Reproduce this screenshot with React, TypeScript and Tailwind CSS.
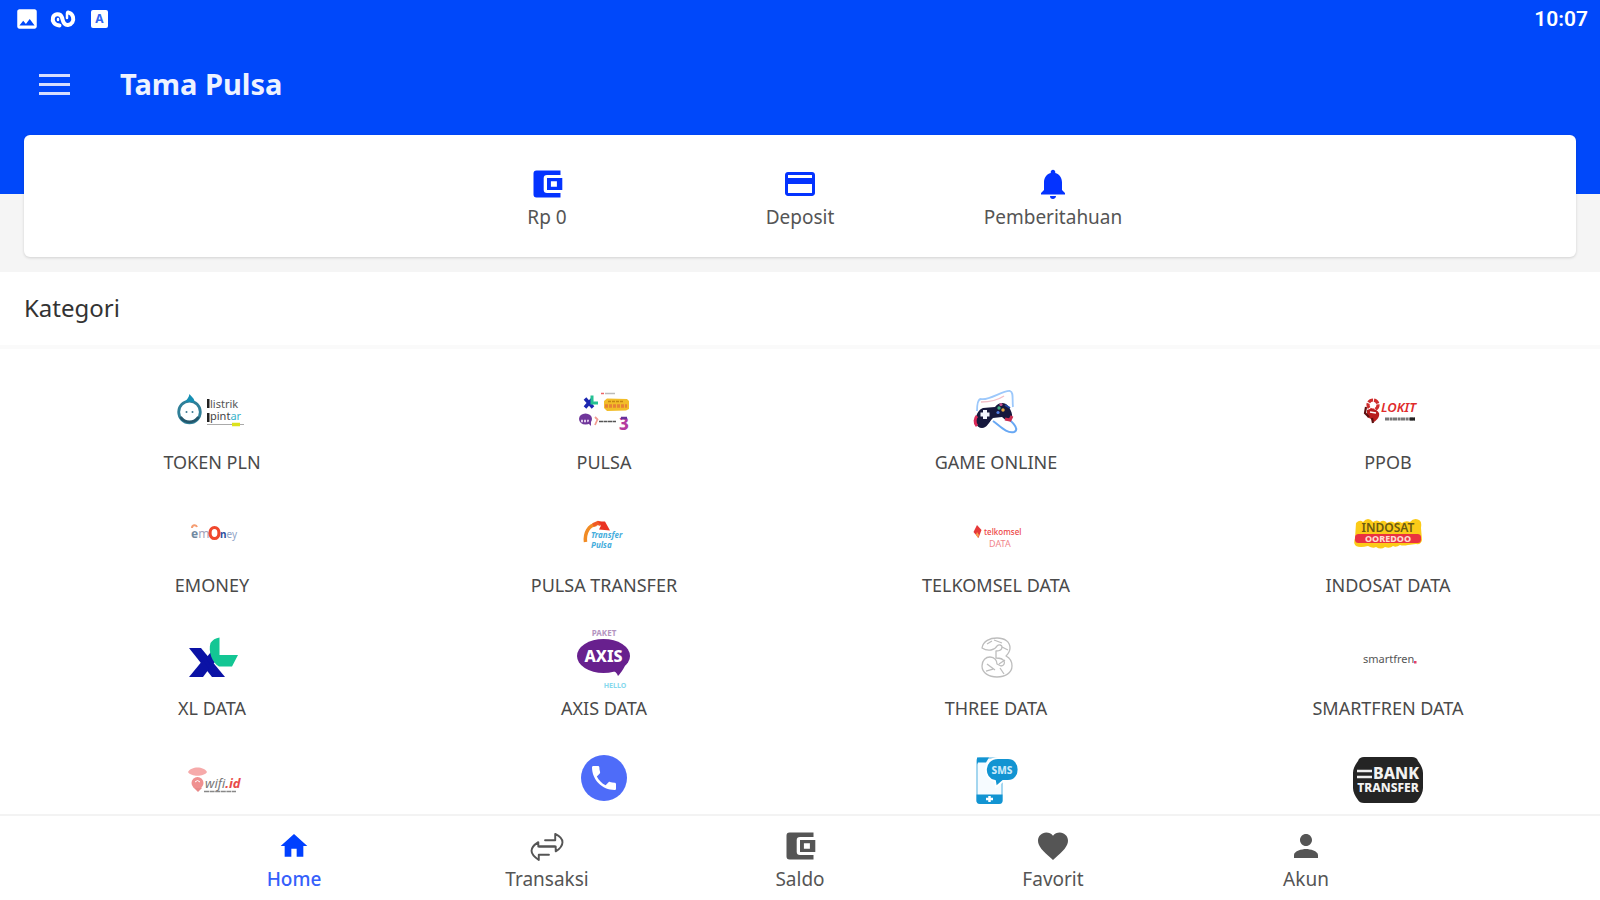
import type { ReactNode } from "react";
import { MdCreditCard, MdFavorite, MdHome, MdImage, MdNotifications, MdPerson, MdPhone } from "react-icons/md";

function WalletIcon({ className }: { className?: string }) {
  return (
    <svg viewBox="0 0 24 24" className={className} fill="currentColor" aria-hidden="true">
      <path d="M21 18v3H5a2 2 0 0 1-2-2V5a2 2 0 0 1 2-2h16v3h-9a2.200 2.200 0 0 0-2.200 2.200v7.600A2.200 2.200 0 0 0 12 18z" />
      <path fillRule="evenodd" d="M12 8h10.200v8H12zM14.600 10.200v3.600h4v-3.600z" />
    </svg>
  );
}

function TransferIcon({ className }: { className?: string }) {
  return (
    <svg
      viewBox="0 0 36 30"
      className={className}
      fill="none"
      stroke="currentColor"
      strokeWidth="2"
      strokeLinejoin="round"
      strokeLinecap="round"
      aria-hidden="true"
    >
      <path d="M16 8.500h10.500V2c4 2 7.500 5 7.500 8.500s-3 7-7 9.500v-5H10" />
      <path d="M20 23.500H9.500V29C5 26 2 23 2 19.500S5 13 9 10.500V15h17" />
    </svg>
  );
}

type WordProps = {
  x: number;
  y: number;
  size: number;
  fill: string;
  weight?: number;
  italic?: boolean;
  anchor?: "start" | "middle";
  children: ReactNode;
};

function Word({ x, y, size, fill, weight = 400, italic, anchor = "start", children }: WordProps) {
  return (
    <text
      x={x}
      y={y}
      fontSize={size}
      fill={fill}
      fontWeight={weight}
      fontStyle={italic ? "italic" : "normal"}
      textAnchor={anchor}
    >
      {children}
    </text>
  );
}

function Logo({ children }: { children: ReactNode }) {
  return (
    <svg viewBox="0 0 72 60" className="h-[60px] w-[72px] overflow-visible" aria-hidden="true">
      {children}
    </svg>
  );
}

const tokenLogo = (
  <Logo>
    <circle cx="13.500" cy="31" r="10.800" fill="none" stroke="#2f7f98" strokeWidth="2.800" />
    <path d="M9 20.500c2-2 4-4 4.500-7.500 2 3 5 4 5 8z" fill="#168eb2" />
    <path d="M4.500 36a10.800 10.800 0 0 0 18 0" fill="none" stroke="#24576c" strokeWidth="2.800" />
    <circle cx="10.500" cy="31" r="1" fill="#3b7890" />
    <circle cx="16.500" cy="31" r="1" fill="#3b7890" />
    <Word x={34} y={27} size={11} fill="#555">listrik</Word>
    <rect x="31" y="18" width="2.500" height="9" fill="#222" />
    <Word x={34} y={39} size={11} fill="#444">
      pint<tspan fill="#38b3cb">ar</tspan>
    </Word>
    <rect x="31" y="32" width="2.500" height="9" fill="#222" />
    <path d="M31 43.500h37" stroke="#aaa" strokeWidth="1.200" />
    <path d="M56 43.500h8" stroke="#dce21d" strokeWidth="3.500" />
  </Logo>
);

const pulsaLogo = (
  <Logo>
    <path d="M33 12.500h3" stroke="#e66" strokeWidth="1.500" />
    <path d="M37 12.500h10" stroke="#bbb" strokeWidth="1.500" />
    <path d="M17 17.500l8 9M17 26.500l7-8" stroke="#1c27b0" strokeWidth="3.500" />
    <path d="M24 14.500v7.500h6" stroke="#24c192" strokeWidth="3" fill="none" />
    <path d="M36 20l3-2.500 20 .5 2 2v8l-3 1.500-19 .5-3-3z" fill="#f2bd28" />
    <path d="M37 25h22" stroke="#e78334" strokeWidth="3.500" strokeDasharray="3 1" />
    <path d="M40 20.500h16" stroke="#c58612" strokeWidth="1.500" strokeDasharray="3 1" />
    <ellipse cx="17.500" cy="38" rx="6.500" ry="5.500" fill="#70379b" />
    <path d="M13 40h9" stroke="#e0c9ec" strokeWidth="2.500" strokeDasharray="2 1" />
    <path d="M19 41l4 4v-5z" fill="#70379b" />
    <path d="M27 36l2.500 2.500L27 44" stroke="#f29c8f" strokeWidth="1.800" fill="none" />
    <path d="M31 40.500h17" stroke="#555" strokeWidth="1.500" strokeDasharray="4 .5" />
    <Word x={51} y={49} size={17} weight={800} fill="#b43ba0">3</Word>
    <path d="M53 37h6" stroke="#67309b" strokeWidth="2.500" />
  </Logo>
);

const gameLogo = (
  <Logo>
    <path d="M17 30c0-6 1-12 4-12 8 2 22-9 29-8 4 1 2 9 3 16" fill="none" stroke="#9cc8fb" strokeWidth="1.800" />
    <path d="M21 21c10 0 17-2 23-6" fill="none" stroke="#f3bfc8" strokeWidth="1.500" />
    <path d="M33 40c7 5 14 13 21 11 7-3-4-12-9-16" fill="none" stroke="#68a8f4" strokeWidth="2" />
    <path d="M16 43c-2-8 3-15 7-16l12-1c3-4 7-5 11-3 4 3 7 10 6 14-3 5-7 2-10-1l-9 1c-4 4-6 10-11 10-3 0-5-2-6-4z" fill="#16183d" />
    <path d="M17 45c-3-3-2-8 0-10" stroke="#da2858" strokeWidth="3" fill="none" />
    <path d="M45 38l5 1 2-4" stroke="#c92d50" strokeWidth="3" fill="none" />
    <path d="M25 29v9M20.500 33.500h9" stroke="#f3f5ff" strokeWidth="4" />
    <circle cx="39" cy="27" r="1.700" fill="#3fae80" />
    <circle cx="43" cy="29" r="1.700" fill="#e4a940" />
    <circle cx="41" cy="23.500" r="1.600" fill="#c65391" />
    <circle cx="38" cy="31.500" r="1.600" fill="#517ce3" />
    <path d="M45 24l5 3" stroke="#1f46a2" strokeWidth="2" />
  </Logo>
);

const ppobLogo = (
  <Logo>
    <circle cx="21" cy="24" r="5" fill="#fff" stroke="#cf2d2d" strokeWidth="3.200" strokeDasharray="5 1" />
    <path d="M15 29c4-2 10-1 12 3 1 4-2 7-5 9l-3-3-4-2z" fill="#b81e1e" />
    <path d="M14 26l-1 6 4 4M20 37l1 5" stroke="#5c1010" strokeWidth="2.200" fill="none" />
    <path d="M18 31l6 1" stroke="#fff" strokeWidth="1.500" />
    <Word x={29} y={31} size={13} weight={600} italic fill="#e02b2b">LOKIT</Word>
    <path d="M33 38h30" stroke="#777" strokeWidth="3" strokeDasharray="4 .6 3 .4" />
    <path d="M58 38h5" stroke="#222" strokeWidth="3" />
  </Logo>
);

const emoneyLogo = (
  <Logo>
    <path d="M16 24c0-3 4-4 5-1" stroke="#f59d72" strokeWidth="2" fill="none" />
    <Word x={15} y={34} size={12} fill="#a3a3ba">
      <tspan fontWeight={700} fill="#7089a1">e</tspan>m
    </Word>
    <ellipse cx="38.500" cy="29" rx="4.500" ry="5.500" fill="#fff" stroke="#f0472d" strokeWidth="3.200" />
    <Word x={44} y={34} size={10} fill="#8fa3c6">
      <tspan fontWeight={700} fill="#2c4f9c">n</tspan>ey
    </Word>
  </Logo>
);

const transferLogo = (
  <Logo>
    <path d="M17.500 38c-1-9 3-17 11-17.500" fill="none" stroke="#f18b24" strokeWidth="3.500" />
    <path d="M25 21l5-2 3 1" fill="none" stroke="#f05a24" strokeWidth="4" />
    <path d="M30 17.500h7l5 9-11-1 2-4z" fill="#ea3323" />
    <Word x={23} y={34} size={8} italic weight={700} fill="#45addc">Transfer</Word>
    <Word x={23} y={44} size={8} italic weight={700} fill="#45addc">Pulsa</Word>
  </Logo>
);

const telkomselLogo = (
  <Logo>
    <path d="M17 21l4.500 5-3 8-5-6z" fill="#e63838" />
    <path d="M17 28l2 3-1 3-2-3z" fill="#f7a04f" />
    <Word x={24} y={31} size={8} weight={500} fill="#ed4545">telkomsel</Word>
    <Word x={29} y={43} size={9} fill="#f1868b">DATA</Word>
  </Logo>
);

const indosatLogo = (
  <Logo>
    <path
      d="M4 19q4-4 7-1 5-6 10 0 4-3 7 0 4-3 7 1 4-3 8 0 3-3 7 0 4-3 8-1 4-5 9-2 3 1 2 8l1 12q-1 5-6 4l-8 1q-5 1-8 0-4 3-7 1-3 3-8 1-4 3-9 0-3 2-8-1-8 2-12 0-3-3-1-8z"
      fill="#fbcb18"
    />
    <Word x={36} y={28} size={12} weight={600} anchor="middle" fill="#6a5a12">INDOSAT</Word>
    <rect x="3" y="30" width="66" height="9" rx="3.500" fill="#ea3240" />
    <Word x={36} y={38} size={9} weight={800} anchor="middle" fill="#ffd9cf">OOREDOO</Word>
  </Logo>
);

const xlLogo = (
  <Logo>
    <path d="M13 21h12l24 29H36z" fill="#0b12a5" />
    <path d="M13 50l14-17 6 9-6 8z" fill="#0b12a5" />
    <path d="M30 31l5-6 4 10-4 4z" fill="#0b12a5" />
    <path d="M34.500 16c2-3 5-5 9-5.500V28h18.500l-6 11.500H43c-7-4-11-15-8.500-23.500z" fill="#13c694" />
  </Logo>
);

const axisLogo = (
  <Logo>
    <Word x={36} y={9} size={8} weight={700} anchor="middle" fill="#b394bf">PAKET</Word>
    <ellipse cx="35.500" cy="29" rx="26.500" ry="17" fill="#68208e" />
    <path d="M43 43c4 1 6 3 7 6 3-3 8-10 8-15z" fill="#68208e" />
    <Word x={35.5} y={35} size={16} weight={800} anchor="middle" fill="#fff">AXIS</Word>
    <Word x={47} y={61} size={7} weight={700} anchor="middle" fill="#87d9ed">HELLO</Word>
  </Logo>
);

const threeLogo = (
  <Logo>
    <g fill="#fff" stroke="#bdbdbd" strokeWidth="1.300" strokeLinejoin="round">
      <path d="M22 21c1-7 8-10 15-10 8 0 13 4 13 10 0 4-2 6-4 8 4 2 6 6 6 10 0 7-7 11-15 11s-15-4-15-11c0-6 4-9 8-9 5 0 7 4 7 7l4 2c3 0 4-3 3-5s-4-3-8-3v-7c4 0 6-2 6-4s-3-3-5-1c-2 4-9 6-15 2z" />
      <path d="M27 17l5-3M34 13l8 3M42 20l6 3M27 37l8 6M39 37l6-4M40 41l4 6M26 44l7-2" />
    </g>
  </Logo>
);

const smartfrenLogo = (
  <Logo>
    <Word x={11} y={36} size={11} fill="#555">smartfren</Word>
    <rect x="62" y="34" width="2.500" height="2.500" fill="#e4406b" />
  </Logo>
);

const wifiLogo = (
  <Logo>
    <path d="M12 22c3-6 16-6 19 0-3 5-16 5-19 0z" fill="#f6aaaa" />
    <circle cx="21.500" cy="33" r="6" fill="#ef9090" />
    <path d="M18 38l4 4 4-4z" fill="#e88989" />
    <path d="M19 32q2.500-3 5 0" stroke="#fff" strokeWidth="1" fill="none" />
    <Word x={29} y={38} size={13} italic fill="#777">
      wifi<tspan fontWeight={700} fill="#e84949">.id</tspan>
    </Word>
    <path d="M28 41.500h32" stroke="#888" strokeWidth="1.500" strokeDasharray="5 .6" />
  </Logo>
);

const phoneLogo = (
  <span className="flex h-[60px] items-start pt-[5px]">
    <span className="flex h-[46px] w-[46px] items-center justify-center rounded-full bg-[#4e6cf9] text-white">
      <MdPhone className="h-8 w-8" aria-hidden="true" />
    </span>
  </span>
);

const smsLogo = (
  <Logo>
    <rect x="17" y="8" width="25" height="45" rx="3" fill="#f6fbff" stroke="#8fcdec" strokeWidth="1.600" />
    <path d="M17 7.500h12l-3 5h-8l-1 2z" fill="#1294d2" />
    <path d="M16.500 44.500h26v6A3.500 3.500 0 0 1 39 54H20a3.500 3.500 0 0 1-3.500-3.500z" fill="#1294d2" />
    <path d="M26 49h7M29.500 46v6" stroke="#fff" strokeWidth="2.500" />
    <path d="M38 8h10c14 0 14 23 0 23h-5l-7 6-1-6C22 29 23 8 38 8z" fill="#1294d2" stroke="#fff" strokeWidth="1.800" />
    <Word x={42} y={24} size={10} weight={800} anchor="middle" fill="#c9e9fa">SMS</Word>
  </Logo>
);

const bankLogo = (
  <Logo>
    <path d="M12 7h48c3 0 5 1 6 4 3 4 5 8 5 12v15c0 4-2 8-5 12-1 2-3 3-6 3H12c-3 0-5-1-6-3-3-4-5-8-5-12V23c0-4 2-8 5-12 1-3 3-4 6-4z" fill="#242424" />
    <path d="M5 21h15M5 27h15" stroke="#eee" strokeWidth="2.500" />
    <Word x={44} y={29} size={16} weight={800} anchor="middle" fill="#f2f2f2">BANK</Word>
    <Word x={36} y={42} size={12} weight={800} anchor="middle" fill="#f2f2f2">TRANSFER</Word>
  </Logo>
);

type Category = { name: string; logo: ReactNode; labelled?: boolean };

const categories: Category[] = [
  { name: "TOKEN PLN", logo: tokenLogo, labelled: true },
  { name: "PULSA", logo: pulsaLogo, labelled: true },
  { name: "GAME ONLINE", logo: gameLogo, labelled: true },
  { name: "PPOB", logo: ppobLogo, labelled: true },
  { name: "EMONEY", logo: emoneyLogo, labelled: true },
  { name: "PULSA TRANSFER", logo: transferLogo, labelled: true },
  { name: "TELKOMSEL DATA", logo: telkomselLogo, labelled: true },
  { name: "INDOSAT DATA", logo: indosatLogo, labelled: true },
  { name: "XL DATA", logo: xlLogo, labelled: true },
  { name: "AXIS DATA", logo: axisLogo, labelled: true },
  { name: "THREE DATA", logo: threeLogo, labelled: true },
  { name: "SMARTFREN DATA", logo: smartfrenLogo, labelled: true },
  { name: "WIFI ID", logo: wifiLogo },
  { name: "TELEPON", logo: phoneLogo },
  { name: "SMS", logo: smsLogo },
  { name: "BANK TRANSFER", logo: bankLogo },
];

const shortcuts = [
  { label: "Rp 0", icon: <WalletIcon className="h-9 w-9" /> },
  { label: "Deposit", icon: <MdCreditCard className="h-9 w-9" aria-hidden="true" /> },
  { label: "Pemberitahuan", icon: <MdNotifications className="h-9 w-9" aria-hidden="true" /> },
];

const tabs = [
  { label: "Home", icon: <MdHome className="h-8 w-8" aria-hidden="true" />, active: true },
  { label: "Transaksi", icon: <TransferIcon className="h-[29px] w-9" /> },
  { label: "Saldo", icon: <WalletIcon className="h-9 w-9" /> },
  { label: "Favorit", icon: <MdFavorite className="h-9 w-9" aria-hidden="true" /> },
  { label: "Akun", icon: <MdPerson className="h-9 w-9" aria-hidden="true" /> },
];

export default function App() {
  return (
    <div className="flex h-screen flex-col overflow-hidden bg-white font-['Noto_Sans',sans-serif] text-[#4a4a4a]">
      <div className="shrink-0 bg-[#f5f5f5] pb-[15px]">
        <header className="bg-[#0048fa] pb-16 text-white">
          <div className="flex h-[38px] items-center justify-between px-3">
            <div className="flex items-center gap-[10px] pl-[2px]">
              <MdImage className="h-[26px] w-[26px]" aria-hidden="true" />
              <svg viewBox="0 0 26 20" className="h-5 w-[26px]" fill="none" stroke="currentColor" strokeWidth="4" strokeLinecap="round" aria-hidden="true">
                <path d="M9.500 16.500C4 16 2 12 3 8.500s7-5 9 0c1 3 1 8 6 7.500 4-.5 6-4 5-8s-3-4-5-4.500" />
                <path d="M8 10v1M17 4v5" strokeWidth="2.500" />
              </svg>
              <svg viewBox="0 0 26 20" className="h-5 w-[26px]" aria-hidden="true">
                <rect x="5" y="1" width="17" height="18" rx="2" fill="#fff" />
                <text x="13.500" y="14" fontSize="12" fontWeight="700" textAnchor="middle" fill="#2f63f0">A</text>
              </svg>
            </div>
            <time className="font-['Roboto',sans-serif] text-[21px] leading-7 font-semibold">10:07</time>
          </div>
          <div className="flex h-[92px] items-center gap-[50px] pl-[39px]">
            <button type="button" aria-label="Menu" className="flex w-[31px] flex-col gap-[6px]">
              <span className="h-[3px] bg-[#d6defe]" />
              <span className="h-[3px] bg-[#d6defe]" />
              <span className="h-[3px] bg-[#d6defe]" />
            </button>
            <h1 className="text-[29px] leading-9 font-bold text-[#eef2ff]">Tama Pulsa</h1>
          </div>
        </header>
        <section className="mx-6 -mt-[59px] flex h-[122px] justify-center rounded-md bg-white shadow-[0_1px_3px_rgba(0,0,0,0.15)]">
          {shortcuts.map((s) => (
            <button key={s.label} type="button" className="flex w-[253px] flex-col items-center pt-[31px]">
              <span className="flex h-9 items-center text-[#0433ff]">{s.icon}</span>
              <span className="mt-[3px] text-[19px] leading-6 text-[#555]">{s.label}</span>
            </button>
          ))}
        </section>
      </div>

      <h2 className="shrink-0 border-b-4 border-[#fafafa] px-6 pt-5 pb-[22px] text-[24px] leading-[31px] text-[#333]">Kategori</h2>

      <main className="min-h-0 flex-1 overflow-y-auto px-4 pt-8 [scrollbar-width:none]">
        <div className="grid grid-cols-4 gap-y-[29px]">
          {categories.map((c) => (
            <button key={c.name} type="button" aria-label={c.name} className="flex flex-col items-center gap-2">
              {c.logo}
              {c.labelled && <span className="text-[18px] leading-[26px]">{c.name}</span>}
            </button>
          ))}
        </div>
      </main>

      <nav className="flex h-[86px] shrink-0 justify-center border-t-2 border-[#f3f3f3] bg-white">
        {tabs.map((t) => (
          <a
            key={t.label}
            href="#"
            aria-current={t.active ? "page" : undefined}
            className={`flex w-[253px] flex-col items-center pt-3 ${t.active ? "text-[#0040ff]" : "text-[#555]"}`}
          >
            <span className="flex h-9 items-center">{t.icon}</span>
            <span className={`mt-[3px] text-[19px] leading-6 ${t.active ? "font-medium text-[#3560fb]" : "text-[#555]"}`}>
              {t.label}
            </span>
          </a>
        ))}
      </nav>
    </div>
  );
}
